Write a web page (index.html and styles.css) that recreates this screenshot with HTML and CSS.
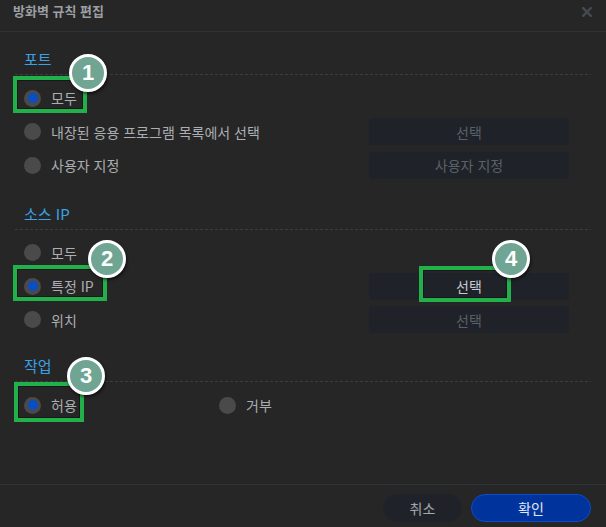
FILE: index.html
```html
<!DOCTYPE html>
<html lang="ko">
<head>
<meta charset="utf-8">
<title>방화벽 규칙 편집</title>
<link rel="stylesheet" href="styles.css">
</head>
<body>
<div class="dialog">
  <header class="dlg-head">
    <h1 class="dlg-title">방화벽 규칙 편집</h1>
    <button class="close" type="button" aria-label="닫기">
      <svg width="10" height="10" viewBox="0 0 10 10"><path d="M1.2 1.2 L8.8 8.8 M8.8 1.2 L1.2 8.8" stroke="#464a4f" stroke-width="2.4" stroke-linecap="square"/></svg>
    </button>
  </header>

  <main class="dlg-body">
    <section class="group">
      <h2 class="group-title">포트</h2>
      <div class="options">
        <div class="opt-row"><label class="radio checked"><span class="dot"></span>모두</label></div>
        <div class="opt-row"><label class="radio"><span class="dot"></span>내장된 응용 프로그램 목록에서 선택</label><button class="side-btn" type="button" disabled>선택</button></div>
        <div class="opt-row"><label class="radio"><span class="dot"></span>사용자 지정</label><button class="side-btn" type="button" disabled>사용자 지정</button></div>
      </div>
    </section>

    <section class="group">
      <h2 class="group-title">소스 IP</h2>
      <div class="options">
        <div class="opt-row"><label class="radio"><span class="dot"></span>모두</label></div>
        <div class="opt-row"><label class="radio checked"><span class="dot"></span>특정 IP</label><button class="side-btn active" type="button">선택</button></div>
        <div class="opt-row"><label class="radio"><span class="dot"></span>위치</label><button class="side-btn" type="button" disabled>선택</button></div>
      </div>
    </section>

    <section class="group last">
      <h2 class="group-title">작업</h2>
      <div class="options">
        <div class="opt-row inline">
          <label class="radio checked"><span class="dot"></span>허용</label>
          <label class="radio"><span class="dot"></span>거부</label>
        </div>
      </div>
    </section>
  </main>

  <footer class="dlg-foot">
    <button class="btn cancel" type="button">취소</button>
    <button class="btn ok" type="button">확인</button>
  </footer>

  <div class="mark box b1"></div>
  <div class="mark box b2"></div>
  <div class="mark box b3"></div>
  <div class="mark box b4"></div>
  <div class="mark num n1">1</div>
  <div class="mark num n2">2</div>
  <div class="mark num n3">3</div>
  <div class="mark num n4">4</div>
</div>
</body>
</html>
```

FILE: styles.css
```css
* { box-sizing: border-box; }
html, body { margin: 0; padding: 0; background: #262626; }
body { font-family: "Noto Sans CJK KR", "Noto Sans", sans-serif; }

.dialog {
  position: relative;
  width: 606px;
  height: 527px;
  background: #262626;
  display: flex;
  flex-direction: column;
  overflow: hidden;
}

.dlg-head {
  height: 32px;
  border-bottom: 1px solid #2e3338;
  display: flex;
  align-items: flex-start;
  justify-content: space-between;
  padding: 2px 14px 0 13px;
}
.dlg-title {
  margin: 0;
  font-size: 13px;
  font-weight: 700;
  color: #9c9fa3;
  line-height: 18px;
}
.close {
  background: none;
  border: 0;
  padding: 0;
  width: 10px;
  height: 10px;
  margin-top: 5px;
  display: flex;
}

.dlg-body {
  flex: 1;
  padding: 17px 15px 0 15px;
}
.group + .group { margin-top: 21.5px; }
.group.last { margin-top: 19.5px; }
.group-title {
  margin: 0;
  font-size: 15px;
  font-weight: 400;
  line-height: 20px;
  color: #3aa2e6;
  padding: 0 0 5px 9px;
  position: relative;
}
.group-title::after {
  content: "";
  position: absolute;
  left: 0;
  right: 0;
  bottom: -1px;
  height: 1px;
  background: repeating-linear-gradient(to right, #3d3d3d 0 3px, transparent 3px 5px);
}

.options { padding-top: 7.5px; padding-left: 9px; }
.opt-row {
  height: 33.5px;
  display: grid;
  grid-template-columns: 345px 200px;
  align-items: center;
}
.opt-row.inline { grid-template-columns: 195px 200px; }

.radio {
  display: flex;
  align-items: center;
  gap: 10px;
  font-size: 14px;
  color: #abaeb2;
  line-height: 18px;
  white-space: nowrap;
}
.dot {
  width: 17px;
  height: 17px;
  border-radius: 50%;
  background: #4a4a4a;
  display: flex;
  align-items: center;
  justify-content: center;
  flex: none;
}
.radio.checked .dot::before {
  content: "";
  width: 10px;
  height: 10px;
  border-radius: 50%;
  background: #0a4ec5;
}

.side-btn {
  height: 27px;
  border: 0;
  border-radius: 3px;
  background: #1f2329;
  color: #5b6067;
  font-family: inherit;
  font-size: 14px;
  padding: 0;
}
.side-btn.active { color: #c6c9cd; }

.dlg-foot {
  height: 43px;
  border-top: 1px solid #2e3338;
  display: flex;
  justify-content: flex-end;
  gap: 9px;
  padding: 9px 15px 5px 15px;
}
.btn {
  height: 28px;
  border-radius: 14px;
  font-family: inherit;
  font-size: 14px;
  padding: 0;
}
.btn.cancel {
  width: 79px;
  background: #1f2329;
  border: 0;
  color: #a3a6aa;
}
.btn.ok {
  width: 120px;
  background: #00339c;
  border: 1px solid #0a4ec8;
  color: #e4e8f0;
}

.mark { position: absolute; }
.box {
  border: 4px solid #22b04b;
  box-shadow: inset 0 0 0 1px rgba(0,0,0,0.35);
}
.b1 { left: 13px; top: 76px; width: 74px; height: 37px; }
.b2 { left: 13px; top: 265px; width: 94px; height: 36px; }
.b3 { left: 14px; top: 382px; width: 70px; height: 40px; }
.b4 { left: 419px; top: 266px; width: 92px; height: 36px; }

.num {
  width: 38px;
  height: 38px;
  border-radius: 50%;
  background: #6fa592;
  border: 3px solid #ffffff;
  box-shadow: 1px 2px 3px rgba(0,0,0,0.6);
  color: #ffffff;
  font-family: "Liberation Sans", Arial, sans-serif;
  font-weight: 700;
  font-size: 22px;
  line-height: 32px;
  text-align: center;
}
.n1 { left: 69px; top: 54px; }
.n2 { left: 88px; top: 240px; }
.n3 { left: 67px; top: 357px; }
.n4 { left: 492px; top: 240px; }
```
